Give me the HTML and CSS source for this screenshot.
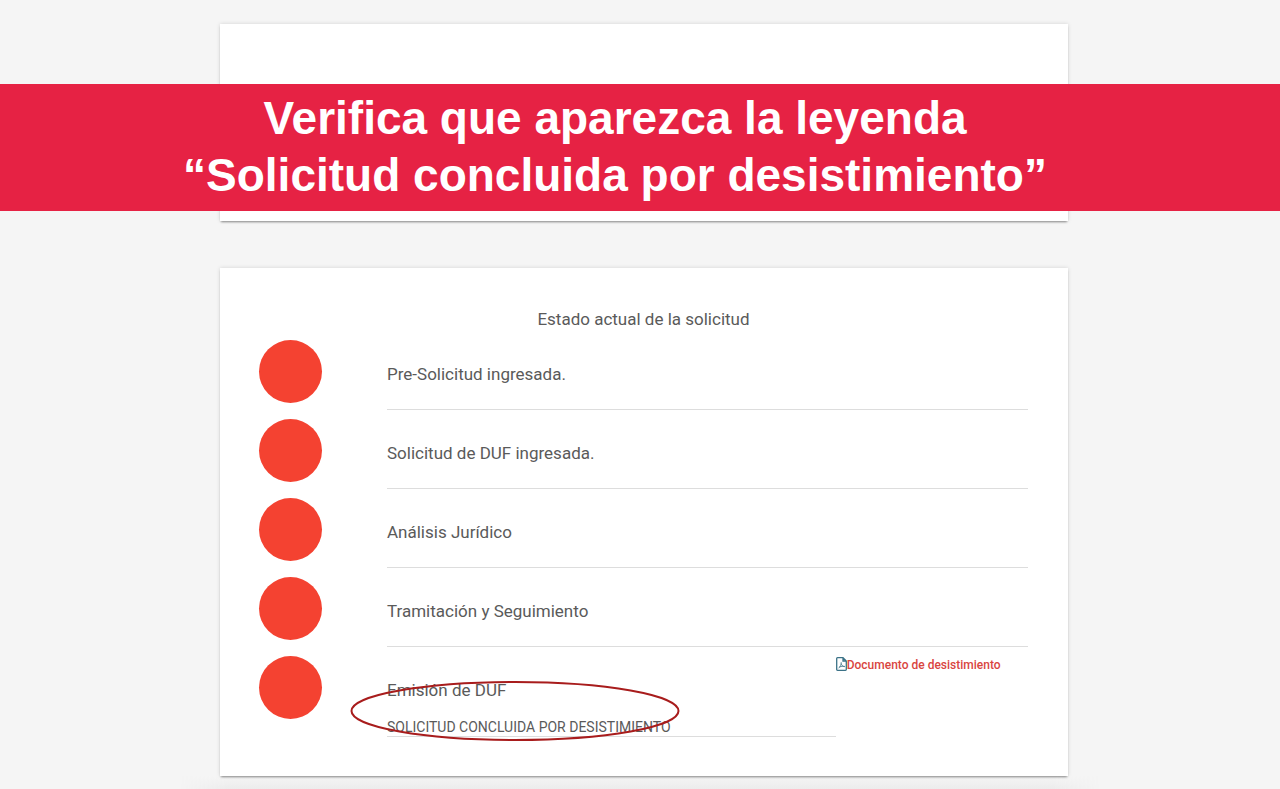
FILE: index.html
```html
<!DOCTYPE html>
<html lang="es">
<head>
<meta charset="utf-8">
<meta name="viewport" content="width=device-width, initial-scale=1">
<title>Estado actual de la solicitud</title>
<link rel="stylesheet" href="styles.css">
</head>
<body>
<header class="banner">
  <h1 class="banner-text">Verifica que aparezca la leyenda<br>“Solicitud concluida por desistimiento”</h1>
</header>
<main class="page">
  <section class="card card-empty"></section>
  <section class="card card-status">
    <h2 class="title">Estado actual de la solicitud</h2>
    <ol class="steps">
      <li class="step"><span class="dot"></span><div class="step-body">Pre-Solicitud ingresada.</div></li>
      <li class="step"><span class="dot"></span><div class="step-body">Solicitud de DUF ingresada.</div></li>
      <li class="step"><span class="dot"></span><div class="step-body">Análisis Jurídico</div></li>
      <li class="step"><span class="dot"></span><div class="step-body">Tramitación y Seguimiento</div></li>
      <li class="step step-last">
        <span class="dot"></span>
        <div class="step-body">
          Emisión de DUF
          <p class="result">SOLICITUD CONCLUIDA POR DESISTIMIENTO</p>
          <svg class="mark" viewBox="0 0 330 62" aria-hidden="true"><ellipse cx="165" cy="31" rx="163.5" ry="29" fill="none" stroke="#a81c1c" stroke-width="2"/></svg>
        </div>
        <a class="document" href="#">
          <svg class="file-icon" viewBox="0 0 11 14" aria-hidden="true">
            <path d="M1.5.7H7L10.3 4v8.500q0 .8-.8.8h-8q-.8 0-.8-.8v-11q0-.8.8-.8zM7 .7V4h3.300" fill="none" stroke="#3b7287" stroke-width="1.300"/>
            <path d="M2.500 11.300C4.200 10 5.500 7.300 5.200 5.200M5.200 6.500C5.700 8.500 6.800 9.500 8.800 9.700M3.300 10Q6 8.800 8.800 9.400" fill="none" stroke="#3b7287" stroke-width=".8"/>
          </svg>Documento de desistimiento</a>
      </li>
    </ol>
  </section>
</main>
<div class="page-shade"></div>
</body>
</html>
```
FILE: styles.css
```css
* { box-sizing: border-box; }

body {
  margin: 0;
  min-height: 100vh;
  background: #f5f5f5;
  color: #5a5a5a;
  font: 17px/24px Roboto, sans-serif;
}

.banner {
  position: absolute;
  top: 84px;
  left: 0;
  right: 0;
  padding: 6px 50px 7px 0;
  background: #e62244;
  color: #fff;
  text-align: center;
}

.banner-text {
  margin: 0;
  font: 700 46px/57px "Liberation Sans", Arial, sans-serif;
}

.page {
  display: flex;
  flex-direction: column;
  gap: 47px;
  max-width: 856px;
  margin: 0 auto;
  padding: 24px 0 0 8px;
}

.card {
  background: #fff;
  box-shadow: 0 2px 2px -1px rgba(0, 0, 0, .4), 0 0 4px rgba(0, 0, 0, .14);
}

.card-empty { min-height: 197px; }

.card-status {
  position: relative;
  z-index: 1;
  padding: 39px 40px 39px 39px;
}

.page-shade {
  max-width: 920px;
  height: 13px;
  margin: 0 auto;
  background: linear-gradient(#f5f5f5, #ececec);
  -webkit-mask-image: linear-gradient(90deg, transparent, #000 5%, #000 95%, transparent);
  mask-image: linear-gradient(90deg, transparent, #000 5%, #000 95%, transparent);
}

.title {
  margin: 0;
  font-size: 17px;
  font-weight: 400;
  line-height: 24px;
  text-align: center;
}

.steps {
  margin: 0;
  padding: 0;
  list-style: none;
}

.step {
  display: grid;
  grid-template-columns: 128px 1fr;
}

.dot {
  width: 63px;
  height: 63px;
  margin-top: 9px;
  border-radius: 50%;
  background: #f44231;
}

.step-body {
  min-height: 79px;
  padding-top: 31px;
  border-bottom: 1px solid #ddd;
}

.step-last { grid-template-columns: 128px 7fr 3fr; }

.step-last .step-body { position: relative; }

.result {
  margin: 16px 0 0;
  font-size: 14px;
  line-height: 18px;
}

.mark {
  position: absolute;
  top: 33px;
  left: -37px;
  width: 330px;
  height: 62px;
}

.document {
  display: flex;
  align-self: start;
  padding-top: 8px;
  color: #d9453f;
  font-size: 12px;
  font-weight: 500;
  line-height: 20px;
  white-space: nowrap;
  text-decoration: none;
}

.file-icon {
  width: 11px;
  height: 14px;
  margin-top: 2px;
}
```
